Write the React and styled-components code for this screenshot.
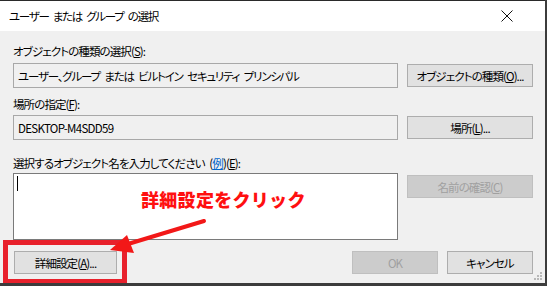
import React from 'react';
import styled, { createGlobalStyle } from 'styled-components';

const GlobalStyle = createGlobalStyle`
  html, body {
    margin: 0;
    padding: 0;
    background: #3c3c3c;
  }
  body {
    font-family: "Noto Sans CJK JP", "Noto Sans", sans-serif;
    font-size: 11.5px;
    font-feature-settings: "palt";
    letter-spacing: -0.9px;
    color: #000;
  }
`;

const Window = styled.div`
  position: relative;
  width: 545px;
  height: 283px;
  box-sizing: border-box;
  border-top: 1px solid #2a2a2a;
  background: #f0f0f0;
  overflow: hidden;
`;

const TitleBar = styled.div`
  height: 30px;
  background: #fff;
  display: flex;
  align-items: center;
  justify-content: space-between;
  padding: 0 31px 0 9px;
  letter-spacing: -1.3px;
  word-spacing: 3px;
`;

const CloseIcon = styled.svg`
  width: 14px;
  height: 14px;
`;

const Body = styled.div`
  padding: 13px 12px 0 13px;
  display: flex;
  flex-direction: column;
`;

const Label = styled.div`
  height: 14px;
  line-height: 14px;
  margin-bottom: ${(p) => p.$gap}px;
  white-space: pre;
  word-spacing: 3px;
`;

const Row = styled.div`
  display: grid;
  grid-template-columns: 385px 126px;
  column-gap: 9px;
  align-items: ${(p) => (p.$top ? 'start' : 'center')};
  margin-bottom: ${(p) => p.$gap}px;
`;

const Field = styled.div`
  box-sizing: border-box;
  height: ${(p) => p.$h}px;
  border: 1px solid ${(p) => (p.$white ? '#7a7a7a' : '#a8a8a8')};
  background: ${(p) => (p.$white ? '#fff' : '#f0f0f0')};
  padding: ${(p) => (p.$white ? '2px 3px' : '0 4px')};
  display: flex;
  align-items: ${(p) => (p.$white ? 'flex-start' : 'center')};
  white-space: pre;
  overflow: hidden;
  letter-spacing: ${(p) => (p.$latin ? '-0.7px' : '-1.2px')};
  word-spacing: 3px;
`;

const Caret = styled.span`
  width: 1px;
  height: 15px;
  background: #000;
`;

const Button = styled.div`
  box-sizing: border-box;
  height: 23px;
  width: ${(p) => p.$w || 126}px;
  margin-top: ${(p) => p.$mt || 0}px;
  border: 1px solid ${(p) => (p.$disabled ? '#bfbfbf' : '#adadad')};
  background: ${(p) => (p.$disabled ? '#cccccc' : '#e1e1e1')};
  color: ${(p) => (p.$disabled ? '#a0a0a0' : '#000')};
  display: flex;
  align-items: center;
  justify-content: center;
  white-space: nowrap;
`;

const Link = styled.span`
  color: #0066cc;
  text-decoration: underline;
`;

const Footer = styled.div`
  display: flex;
  align-items: center;
  margin-top: 11px;
  padding-left: 1px;
`;

const Spacer = styled.div`
  flex: 1;
`;

const FooterButtons = styled.div`
  display: flex;
  gap: 9px;
`;

const Annotation = styled.div`
  position: absolute;
  left: 141px;
  top: 187px;
  color: #ff1010;
  font-size: 18px;
  font-weight: 900;
  line-height: 22px;
  letter-spacing: 0.3px;
  font-feature-settings: normal;
  white-space: nowrap;
`;

const Highlight = styled.div`
  position: absolute;
  left: 3px;
  top: 239px;
  width: 124px;
  height: 44px;
  box-sizing: border-box;
  border: 5px solid #e8212c;
`;

const Overlay = styled.svg`
  position: absolute;
  left: 0;
  top: 0;
  width: 545px;
  height: 283px;
  pointer-events: none;
`;

const Grip = styled.svg`
  position: absolute;
  right: 2px;
  bottom: 2px;
  width: 10px;
  height: 10px;
`;

export default function App() {
  return (
    <>
      <GlobalStyle />
      <Window>
        <TitleBar>
          <span>ユーザー または グループ の選択</span>
          <CloseIcon viewBox="0 0 14 14">
            <path d="M1.5 1.5 L12.5 12.5 M12.5 1.5 L1.5 12.5" stroke="#111" strokeWidth="1" fill="none" />
          </CloseIcon>
        </TitleBar>
        <Body>
          <Label $gap={5}>
            オブジェクトの種類の選択(<u>S</u>):
          </Label>
          <Row $gap={9}>
            <Field $h={25}>ユーザー、グループ または ビルトイン セキュリティ プリンシパル</Field>
            <Button>
              オブジェクトの種類(<u>O</u>)...
            </Button>
          </Row>
          <Label $gap={4}>
            場所の指定(<u>F</u>):
          </Label>
          <Row $gap={16}>
            <Field $h={25} $latin>DESKTOP-M4SDD59</Field>
            <Button>
              場所(<u>L</u>)...
            </Button>
          </Row>
          <Label $gap={3}>
            {'選択するオブジェクト名を入力してください ('}
            <Link>例</Link>)(<u>E</u>):
          </Label>
          <Row $gap={0} $top>
            <Field $h={67} $white>
              <Caret />
            </Field>
            <Button $disabled $mt={2}>
              名前の確認(<u>C</u>)
            </Button>
          </Row>
          <Footer>
            <Button $w={103}>
              詳細設定(<u>A</u>)...
            </Button>
            <Spacer />
            <FooterButtons>
              <Button $w={86} $disabled>
                OK
              </Button>
              <Button $w={86}>キャンセル</Button>
            </FooterButtons>
          </Footer>
        </Body>
        <Annotation>詳細設定をクリック</Annotation>
        <Highlight />
        <Overlay viewBox="0 0 545 283">
          <line x1="204" y1="220" x2="128" y2="243" stroke="#f21818" strokeWidth="4" strokeLinecap="round" />
          <polygon points="110,249 127,234 134,252" fill="#f21818" />
        </Overlay>
        <Grip viewBox="0 0 10 10">
          <g fill="#b8b8b8">
            <rect x="7" y="1" width="2" height="2" />
            <rect x="4" y="4" width="2" height="2" />
            <rect x="7" y="4" width="2" height="2" />
            <rect x="1" y="7" width="2" height="2" />
            <rect x="4" y="7" width="2" height="2" />
            <rect x="7" y="7" width="2" height="2" />
          </g>
        </Grip>
      </Window>
    </>
  );
}
